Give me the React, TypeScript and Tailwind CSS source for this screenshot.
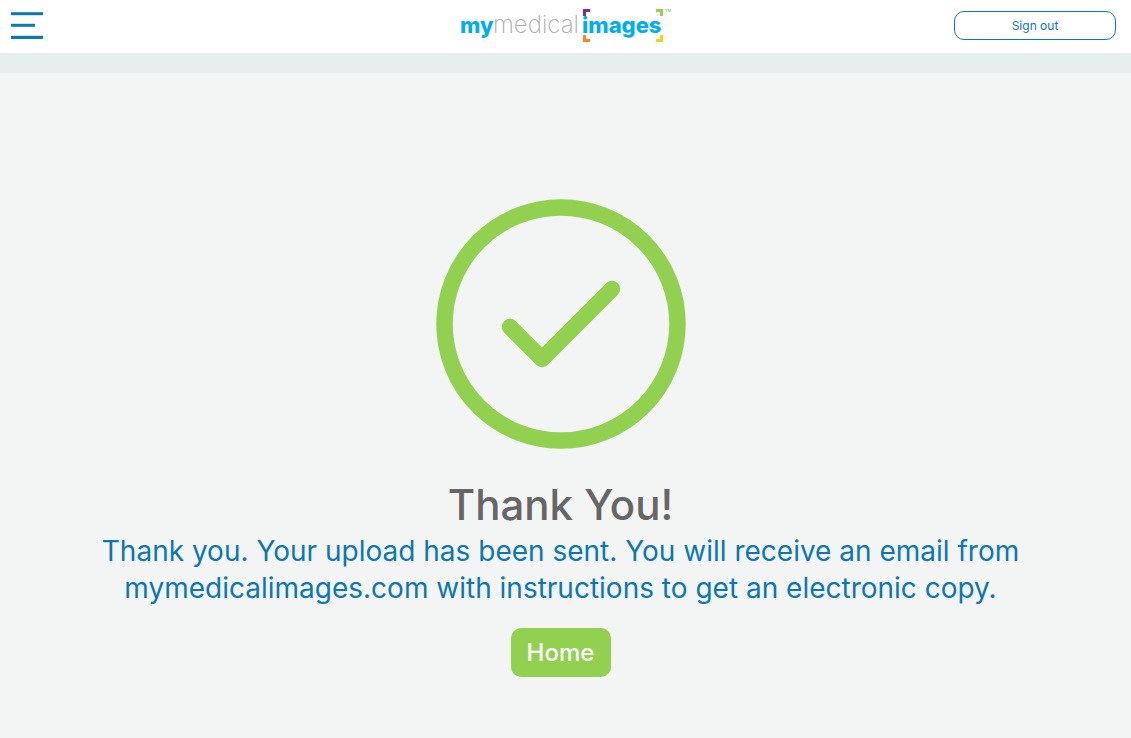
function Logo() {
  return (
    <svg
      viewBox="0 0 212 36"
      className="h-9 w-[212px] font-['Inter',sans-serif]"
      role="img"
      aria-label="mymedicalimages"
    >
      <text x="0" y="25" fontSize="22" fontWeight="800" fill="#00aeef">my</text>
      <text x="33" y="25" fontSize="24" fontWeight="200" fill="#a9abad">medical</text>
      <text x="122" y="25" fontSize="22" fontWeight="800" fill="#00aeef">images</text>
      <path d="M123 1h7v3h-4v4h-3z" fill="#7030a0" />
      <path d="M196 1h7v7h-3v-4h-4z" fill="#92d050" />
      <path d="M123 27h3v4h4v3h-7z" fill="#f7891f" />
      <path d="M200 27h3v7h-7v-3h4z" fill="#f5d20f" />
      <text x="205" y="4" fontSize="4" fill="#8a8a8a">TM</text>
    </svg>
  );
}

function MenuIcon() {
  return (
    <svg viewBox="0 0 32 28" className="h-7 w-8" fill="#0e76b0" aria-hidden="true">
      <rect y="0.2" width="32" height="3" />
      <rect y="11.8" width="24" height="3" />
      <rect y="23.8" width="32" height="3.2" />
    </svg>
  );
}

function SuccessIcon() {
  return (
    <svg viewBox="0 0 250 250" className="size-[250px]" fill="none" stroke="#92d150" aria-hidden="true">
      <circle cx="125" cy="125" r="116.5" strokeWidth="16.5" />
      <path
        d="M74 128l32 32L176 90"
        strokeWidth="16.5"
        strokeLinecap="round"
        strokeLinejoin="round"
      />
    </svg>
  );
}

export default function App() {
  return (
    <div className="flex min-h-screen flex-col bg-[#f3f5f5] font-['Inter',sans-serif]">
      <header className="grid h-[53px] grid-cols-[1fr_auto_1fr] items-center bg-white pb-0.5">
        <button type="button" aria-label="Open menu" className="ml-[11px] justify-self-start">
          <MenuIcon />
        </button>
        <a href="#home" aria-label="mymedicalimages home">
          <Logo />
        </a>
        <button
          type="button"
          className="mr-[15px] h-[29px] w-[162px] justify-self-end rounded-[10px] border border-[#0e76b0] text-xs text-[#0e76b0]"
        >
          Sign out
        </button>
      </header>
      <div className="h-5 bg-[#e7eeee]" />
      <main className="flex flex-col items-center pt-[126px] pr-2.5 pb-12 text-center">
        <SuccessIcon />
        <h1 className="mt-8 text-[42px] leading-12 font-medium text-[#666666]">Thank You!</h1>
        <p className="mt-1 max-w-[960px] px-2 text-[28px] leading-[37px] text-[#0e76b0]">
          Thank you. Your upload has been sent. You will receive an email from
          mymedicalimages.com with instructions to get an electronic copy.
        </p>
        <button
          type="button"
          className="mt-[21px] h-[49px] w-[100px] rounded-[10px] bg-[#92d150] text-2xl font-medium text-white"
        >
          Home
        </button>
      </main>
    </div>
  );
}
